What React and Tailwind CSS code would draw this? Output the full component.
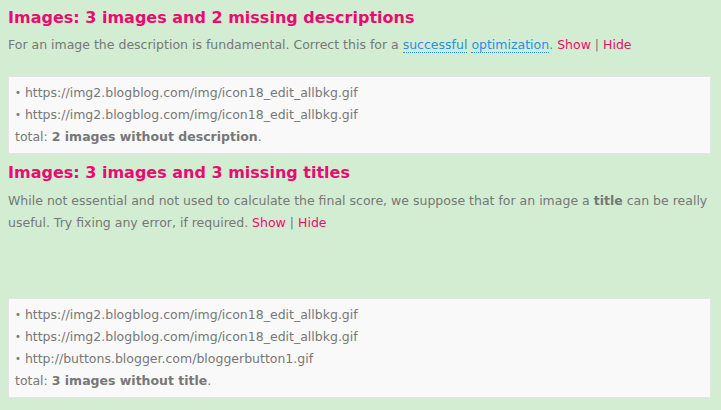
import React from "react";

const FONT = { fontFamily: '"DejaVu Sans", Verdana, sans-serif' };

const UrlBox = ({ urls, count, label }) => (
  <div className="bg-[#f9f9f9] border border-[#e4e4e4] px-[6px] py-[5px] leading-[22px]">
    {urls.map((u, i) => (
      <div key={i}>
        <span className="text-[10px] align-[1px]">•</span> {u}
      </div>
    ))}
    <div>
      total: <b>{count} images without {label}</b>.
    </div>
  </div>
);

const ShowHide = () => (
  <>
    <a className="text-[#ea0b70] cursor-pointer">Show</a>{" "}
    <span>|</span>{" "}
    <a className="text-[#ea0b70] cursor-pointer">Hide</a>
  </>
);

export default function App() {
  const blog = "https://img2.blogblog.com/img/icon18_edit_allbkg.gif";
  return (
    <div
      className="w-[721px] h-[410px] overflow-hidden bg-[#d2edd2] text-[#777777] text-[12.5px] px-2 pt-[6px]"
      style={FONT}
    >
      <h2 className="text-[#ea0b70] font-bold text-[16px] leading-[24px]">
        Images: 3 images and 2 missing descriptions
      </h2>
      <p className="leading-[22px] mt-[4px]">
        For an image the description is fundamental. Correct this for a{" "}
        <a className="text-[#2a8de4] border-b border-dotted border-[#2a8de4]">successful</a>{" "}
        <a className="text-[#2a8de4] border-b border-dotted border-[#2a8de4]">optimization</a>.{" "}
        <ShowHide />
      </p>
      <div className="mt-[20px] mr-[2px]">
        <UrlBox urls={[blog, blog]} count={2} label="description" />
      </div>

      <h2 className="text-[#ea0b70] font-bold text-[16px] leading-[24px] mt-[7px]">
        Images: 3 images and 3 missing titles
      </h2>
      <p className="leading-[22px] mt-[5px]">
        While not essential and not used to calculate the final score, we suppose that for an image a{" "}
        <b>title</b> can be really useful. Try fixing any error, if required. <ShowHide />
      </p>
      <div className="mt-[64px] mr-[2px]">
        <UrlBox
          urls={[blog, blog, "http://buttons.blogger.com/bloggerbutton1.gif"]}
          count={3}
          label="title"
        />
      </div>
    </div>
  );
}
